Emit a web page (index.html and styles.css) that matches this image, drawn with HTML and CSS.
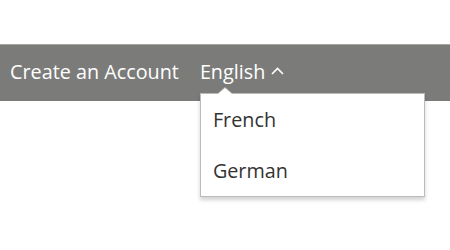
FILE: index.html
```html
<!DOCTYPE html>
<html>
<head>
<meta charset="utf-8">
<link rel="stylesheet" href="styles.css">
</head>
<body>
<div class="page">
  <nav class="bar">
    <a class="link">Create an Account</a>
    <div class="lang">
      <span class="current">English
        <svg class="chev" width="13" height="8" viewBox="0 0 13 8"><path d="M1 7 L6.5 1.5 L12 7" fill="none" stroke="#fff" stroke-width="1.6"/></svg>
      </span>
      <ul class="menu">
        <li>French</li>
        <li>German</li>
      </ul>
    </div>
  </nav>
</div>
</body>
</html>
```
FILE: styles.css
```css
html, body {
  margin: 0;
  padding: 0;
  background: #fff;
  min-height: 250px;
  font-family: "Open Sans", "Liberation Sans", sans-serif;
}
.page {
  padding-top: 44px;
  min-height: 206px;
}
.bar {
  display: flex;
  align-items: center;
  height: 56px;
  background: #7b7c7a;
  border-top: 1px solid #a5a6a4;
  padding-left: 10px;
  color: #fff;
  font-size: 19.8px;
  font-weight: 500;
  gap: 21px;
}
.link {
  color: #fff;
  line-height: 1;
  margin-top: -2px;
}
.lang {
  position: relative;
  line-height: 1;
  margin-top: -2px;
  z-index: 2;
}
.current {
  display: flex;
  align-items: center;
  gap: 6px;
}
.chev {
  margin-top: -2px;
}
.menu {
  position: absolute;
  left: 0;
  top: 31px;
  width: 223px;
  margin: 0;
  padding: 0;
  list-style: none;
  background: #fff;
  border: 1px solid #bbb;
  box-shadow: 0 3px 4px rgba(0,0,0,0.18);
  color: #333;
  font-size: 19.8px;
  font-weight: 500;
}
.menu::before {
  content: "";
  position: absolute;
  left: 16px;
  top: -7px;
  border-left: 8px solid transparent;
  border-right: 8px solid transparent;
  border-bottom: 7px solid #bbb;
}
.menu::after {
  content: "";
  position: absolute;
  left: 17px;
  top: -6px;
  border-left: 7px solid transparent;
  border-right: 7px solid transparent;
  border-bottom: 6px solid #fff;
}
.menu li {
  height: 51px;
  line-height: 51px;
  padding-left: 12px;
}
```
